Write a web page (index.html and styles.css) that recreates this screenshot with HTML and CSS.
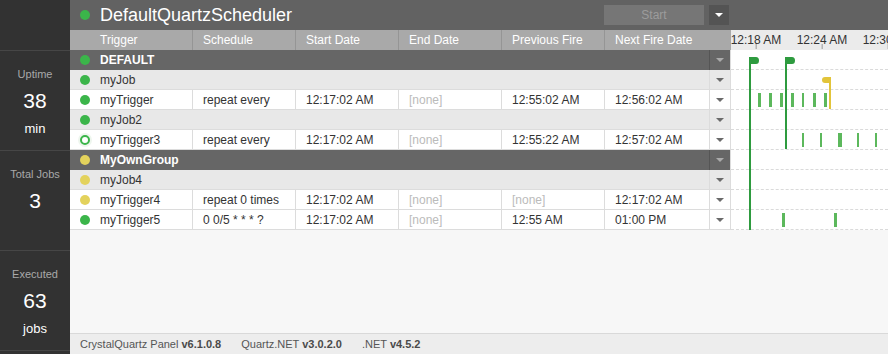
FILE: index.html
```html
<!DOCTYPE html>
<html lang="en">
<head>
  <meta charset="UTF-8" />
  <title>CrystalQuartz Panel</title>
  <link rel="stylesheet" href="styles.css">
</head>
<body>
  <aside class="sidebar">
    <div class="sidebar-top"></div>
    <div class="stat">
      <div class="stat-label">Uptime</div>
      <div class="stat-value">38</div>
      <div class="stat-unit">min</div>
    </div>
    <div class="stat">
      <div class="stat-label">Total Jobs</div>
      <div class="stat-value">3</div>
    </div>
    <div class="stat">
      <div class="stat-label">Executed</div>
      <div class="stat-value">63</div>
      <div class="stat-unit">jobs</div>
    </div>
  </aside>

  <div class="main">
    <header class="topbar">
      <span class="dot green"></span>
      <h1 class="title">DefaultQuartzScheduler</h1>
      <button class="btn-start">Start</button>
      <button class="btn-menu"><span class="caret light"></span></button>
    </header>

    <div class="board">
      <div class="data">
        <div class="row head">
          <div class="cell first">Trigger</div>
          <div class="cell">Schedule</div>
          <div class="cell">Start Date</div>
          <div class="cell">End Date</div>
          <div class="cell">Previous Fire</div>
          <div class="cell wide">Next Fire Date</div>
        </div>

        <div class="row group">
          <div class="cell span"><span class="dot green"></span>DEFAULT</div>
          <div class="cell menu"><span class="caret pale"></span></div>
        </div>
        <div class="row job">
          <div class="cell span"><span class="dot green"></span>myJob</div>
          <div class="cell menu"><span class="caret"></span></div>
        </div>
        <div class="row trigger">
          <div class="cell first"><span class="dot green"></span>myTrigger</div>
          <div class="cell">repeat every</div>
          <div class="cell">12:17:02 AM</div>
          <div class="cell none">[none]</div>
          <div class="cell">12:55:02 AM</div>
          <div class="cell">12:56:02 AM</div>
          <div class="cell menu"><span class="caret"></span></div>
        </div>
        <div class="row job">
          <div class="cell span"><span class="dot green"></span>myJob2</div>
          <div class="cell menu"><span class="caret"></span></div>
        </div>
        <div class="row trigger">
          <div class="cell first"><span class="dot ring"></span>myTrigger3</div>
          <div class="cell">repeat every</div>
          <div class="cell">12:17:02 AM</div>
          <div class="cell none">[none]</div>
          <div class="cell">12:55:22 AM</div>
          <div class="cell">12:57:02 AM</div>
          <div class="cell menu"><span class="caret"></span></div>
        </div>

        <div class="row group">
          <div class="cell span"><span class="dot yellow"></span>MyOwnGroup</div>
          <div class="cell menu"><span class="caret pale"></span></div>
        </div>
        <div class="row job">
          <div class="cell span"><span class="dot yellow"></span>myJob4</div>
          <div class="cell menu"><span class="caret"></span></div>
        </div>
        <div class="row trigger">
          <div class="cell first"><span class="dot yellow"></span>myTrigger4</div>
          <div class="cell">repeat 0 times</div>
          <div class="cell">12:17:02 AM</div>
          <div class="cell none">[none]</div>
          <div class="cell none">[none]</div>
          <div class="cell">12:17:02 AM</div>
          <div class="cell menu"><span class="caret"></span></div>
        </div>
        <div class="row trigger">
          <div class="cell first"><span class="dot green"></span>myTrigger5</div>
          <div class="cell">0 0/5 * * * ?</div>
          <div class="cell">12:17:02 AM</div>
          <div class="cell none">[none]</div>
          <div class="cell">12:55 AM</div>
          <div class="cell">01:00 PM</div>
          <div class="cell menu"><span class="caret"></span></div>
        </div>
      </div>

      <div class="timeline">
        <div class="ticks">
          <span class="tick" style="left: 25px">12:18 AM</span>
          <span class="tick" style="left: 91px">12:24 AM</span>
          <span class="tick" style="left: 157px">12:30 AM</span>
        </div>
        <div class="lanes">
          <div class="lane"></div>
          <div class="lane"></div>
          <div class="lane">
            <i class="hit" style="left: 18px; width: 2px"></i>
            <i class="hit" style="left: 27px"></i>
            <i class="hit" style="left: 38px"></i>
            <i class="hit" style="left: 49px"></i>
            <i class="hit" style="left: 60px"></i>
            <i class="hit" style="left: 71px; width: 2px"></i>
            <i class="hit" style="left: 82px"></i>
            <i class="hit" style="left: 93px"></i>
          </div>
          <div class="lane"></div>
          <div class="lane">
            <i class="hit" style="left: 71px; width: 2px"></i>
            <i class="hit" style="left: 89px; width: 2px"></i>
            <i class="hit" style="left: 107px; width: 4px"></i>
            <i class="hit" style="left: 126px; width: 2px"></i>
            <i class="hit" style="left: 144px; width: 2px"></i>
          </div>
          <div class="lane"></div>
          <div class="lane"></div>
          <div class="lane"></div>
          <div class="lane">
            <i class="hit" style="left: 51px"></i>
            <i class="hit" style="left: 103px"></i>
          </div>

          <!-- scheduler events -->
          <div class="event start" style="left: 18px; top: 7px; height: 173px">
            <svg class="flag" width="10" height="7" viewBox="0 0 10 7"><path d="M0 0H7Q10 0 10 3.5Q10 7 7 7H0Z" fill="#2e9b3f"/></svg>
          </div>
          <div class="event start" style="left: 54px; top: 7px; height: 92px">
            <svg class="flag" width="10" height="7" viewBox="0 0 10 7"><path d="M0 0H7Q10 0 10 3.5Q10 7 7 7H0Z" fill="#2e9b3f"/></svg>
          </div>
          <div class="event pause" style="left: 98px; top: 27px; height: 32px">
            <svg class="flag left" width="9" height="6" viewBox="0 0 9 6"><path d="M9 0H3Q0 0 0 3Q0 6 3 6H9Z" fill="#e2c43a"/></svg>
          </div>
        </div>
      </div>
    </div>

    <div class="filler"></div>

    <footer class="footer">
      <span>CrystalQuartz Panel <b>v6.1.0.8</b></span>
      <span>Quartz.NET <b>v3.0.2.0</b></span>
      <span>.NET <b>v4.5.2</b></span>
    </footer>
  </div>
</body>
</html>
```

FILE: styles.css
```css
body {
  margin: 0;
  height: 354px;
  display: flex;
  font-family: 'Liberation Sans', Arial, sans-serif;
  font-size: 12px;
  color: #333;
  background-color: #f7f7f7;
  overflow: hidden;
}

/* left stats column */
.sidebar {
  width: 70px;
  flex-shrink: 0;
  background-color: #323232;
  color: #fff;
  text-align: center;
}

.sidebar-top {
  height: 50px;
  border-bottom: 1px solid #464646;
}

.stat {
  height: 100px;
  border-bottom: 1px solid #464646;
  padding-top: 13px;
  box-sizing: border-box;
}

.stat-label {
  font-size: 11px;
  line-height: 20px;
  color: #a9a9a9;
}

.stat-value {
  font-size: 21px;
  line-height: 34px;
}

.stat-unit {
  font-size: 13px;
  line-height: 22px;
}

.main {
  flex: 1;
  display: flex;
  flex-direction: column;
  min-width: 0;
}

/* scheduler title bar */
.topbar {
  height: 30px;
  background-color: #626262;
  display: flex;
  align-items: center;
  padding-left: 10px;
}

.title {
  margin: 0;
  font-size: 18px;
  font-weight: normal;
  color: #fff;
  flex: 1;
}

.btn-start {
  width: 100px;
  height: 20px;
  border: 0;
  padding: 0;
  background-color: #767676;
  color: #9c9c9c;
  font-family: inherit;
  font-size: 12px;
}

.btn-menu {
  width: 20px;
  height: 20px;
  border: 0;
  padding: 0;
  margin: 0 159px 0 5px;
  background-color: #545454;
  display: flex;
  align-items: center;
  justify-content: center;
}

.dot {
  display: inline-block;
  width: 10px;
  height: 10px;
  border-radius: 50%;
  margin-right: 10px;
  box-sizing: border-box;
  flex-shrink: 0;
}

.dot.green { background-color: #3bb54a; }
.dot.yellow { background-color: #e3d25c; }

.dot.ring {
  border: 2px solid #3bb54a;
  background-color: #fff;
  box-shadow: 0 0 0 2px #eef6ee;
}

.caret {
  width: 0;
  height: 0;
  border-left: 4px solid transparent;
  border-right: 4px solid transparent;
  border-top: 4px solid #6a6a6a;
}

.caret.light { border-top-color: #fff; }
.caret.pale { border-top-color: #ababab; }

/* jobs table + timeline */
.board {
  display: flex;
}

.data {
  width: 661px;
  flex-shrink: 0;
}

.row {
  display: grid;
  grid-template-columns: 123px 103px 103px 103px 103px 105px 21px;
  height: 20px;
}

.cell {
  display: flex;
  align-items: center;
  padding-left: 10px;
  border-right: 1px solid #dcdcdc;
  border-bottom: 1px solid #dcdcdc;
  white-space: nowrap;
  overflow: hidden;
  box-sizing: border-box;
}

.cell.span {
  grid-column: 1 / 7;
}

.cell.menu {
  padding: 0;
  justify-content: center;
}

.row.head {
  background-color: #a9a9a9;
  color: #fff;
}

.row.head .cell {
  border-right-color: #959595;
  border-bottom: 0;
}

.row.head .cell.first { padding-left: 30px; }

.row.head .cell.wide {
  grid-column: 6 / 8;
  border-right: 0;
}

.row.group {
  background-color: #666;
  color: #fff;
  font-weight: bold;
}

.row.group .cell {
  border-bottom: 0;
}

.row.group .cell.span { border-right-color: #555; }
.row.group .cell.menu { border-right-color: #dcdcdc; }

.row.job {
  background-color: #e8e8e8;
}

.row.trigger {
  background-color: #fff;
}

.cell.none {
  color: #bbb;
}

.timeline {
  flex: 1;
  min-width: 0;
  overflow: hidden;
}

.ticks {
  height: 20px;
  background-color: #ebebeb;
  position: relative;
}

.tick {
  position: absolute;
  top: 3px;
  transform: translateX(-50%);
  white-space: nowrap;
  color: #333;
  font-size: 12px;
}

.tick::after {
  content: "";
  position: absolute;
  left: 50%;
  top: 11px;
  width: 1px;
  height: 5px;
  background-color: #999;
}

.lanes {
  position: relative;
  background-color: #fff;
}

.lane {
  height: 20px;
  border-bottom: 1px dashed #dadada;
  box-sizing: border-box;
  position: relative;
}

.hit {
  position: absolute;
  top: 3px;
  width: 3px;
  height: 14px;
  background-color: #5cb85c;
}

.event {
  position: absolute;
  width: 2px;
}

.event.start { background-color: #2e9b3f; }
.event.pause { background-color: #e2c43a; }

.flag {
  position: absolute;
  top: 0;
  left: 0;
  display: block;
}

.flag.left {
  left: auto;
  right: 0;
}

.filler {
  flex: 1;
}

.footer {
  height: 21px;
  border-top: 1px solid #d9d9d9;
  background-color: #ededed;
  box-sizing: border-box;
  display: flex;
  align-items: center;
  padding-left: 10px;
  gap: 20px;
  font-size: 11px;
  color: #555;
}

.footer b {
  color: #4a4a4a;
}
```
